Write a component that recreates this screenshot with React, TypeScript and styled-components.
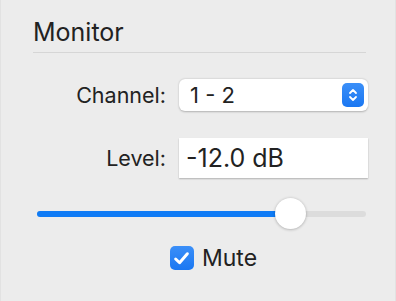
import styled, { createGlobalStyle } from "styled-components";

const Global = createGlobalStyle`
  html, body { margin: 0; padding: 0; background: #ececec; }
  body { font-family: Inter, "Noto Sans", sans-serif; color: #222; }
`;

function Stepper() {
  return (
    <svg width="10" height="14" viewBox="0 0 10 14" fill="none">
      <path d="M2 5 L5 2 L8 5" stroke="#fff" strokeWidth="1.8" strokeLinecap="round" strokeLinejoin="round" />
      <path d="M2 9 L5 12 L8 9" stroke="#fff" strokeWidth="1.8" strokeLinecap="round" strokeLinejoin="round" />
    </svg>
  );
}

export default function App() {
  const level = 0.77;
  return (
    <>
      <Global />
      <Panel>
        <Heading>Monitor</Heading>
        <Form>
          <Label>Channel:</Label>
          <Select>
            <span>1 - 2</span>
            <StepButton>
              <Stepper />
            </StepButton>
          </Select>
          <Label>Level:</Label>
          <Field>-12.0 dB</Field>
        </Form>
        <Slider>
          <Fill style={{ width: `${level * 100}%` }} />
          <Thumb style={{ left: `${level * 100}%` }} />
        </Slider>
        <CheckRow>
          <Box>
            <svg width="17" height="15" viewBox="0 0 16 14" fill="none">
              <path d="M2.5 7.5 L6.2 11 L13.5 2.5" stroke="#fff" strokeWidth="2.8" strokeLinecap="round" strokeLinejoin="round" />
            </svg>
          </Box>
          <CheckText>Mute</CheckText>
        </CheckRow>
      </Panel>
    </>
  );
}

const Panel = styled.div`
  box-sizing: border-box;
  width: 396px;
  height: 301px;
  padding: 17px 29px 0 32px;
  background: #ececec;
  border-left: 1px solid #e2e2e2;
  border-right: 1px solid #e2e2e2;
`;

const Heading = styled.div`
  font-size: 25px;
  line-height: 31px;
  color: #222;
  height: 35px;
  border-bottom: 1px solid #d6d6d6;
`;

const Form = styled.div`
  display: grid;
  grid-template-columns: 133px 189px;
  column-gap: 13px;
  row-gap: 27px;
  align-items: center;
  margin-top: 26px;
`;

const Label = styled.div`
  text-align: right;
  font-size: 21.5px;
  color: #222;
`;

const Select = styled.div`
  box-sizing: border-box;
  height: 32px;
  background: #fff;
  border-radius: 6px;
  box-shadow: 0 0.5px 2px rgba(0, 0, 0, 0.25);
  display: flex;
  align-items: center;
  justify-content: space-between;
  padding: 0 4px 0 11px;
  font-size: 22px;
  color: #222;
`;

const StepButton = styled.div`
  width: 22px;
  height: 24px;
  border-radius: 5px;
  background: linear-gradient(#3b8ff8, #1a77f2);
  display: flex;
  align-items: center;
  justify-content: center;
`;

const Field = styled.div`
  box-sizing: border-box;
  height: 40px;
  background: #fff;
  box-shadow: 0 1px 1.5px rgba(0, 0, 0, 0.25);
  display: flex;
  align-items: center;
  padding: 0 7px;
  font-size: 25px;
  color: #222;
`;

const Slider = styled.div`
  position: relative;
  margin: 33px 0 0 4px;
  height: 6px;
  border-radius: 3px;
  background: #dcdcdc;
`;

const Fill = styled.div`
  height: 100%;
  border-radius: 3px;
  background: #0f7bf5;
`;

const Thumb = styled.div`
  position: absolute;
  top: 50%;
  width: 31px;
  height: 31px;
  margin: -16px 0 0 -15px;
  border-radius: 50%;
  background: #fff;
  box-shadow: 0 0.5px 3px rgba(0, 0, 0, 0.3);
`;

const CheckRow = styled.div`
  display: flex;
  align-items: center;
  justify-content: center;
  gap: 8px;
  margin-top: 27px;
  padding-left: 28px;
`;

const Box = styled.div`
  width: 24px;
  height: 24px;
  border-radius: 5px;
  background: linear-gradient(#3b8ff8, #1a77f2);
  display: flex;
  align-items: center;
  justify-content: center;
`;

const CheckText = styled.div`
  font-size: 23px;
  color: #222;
`;
